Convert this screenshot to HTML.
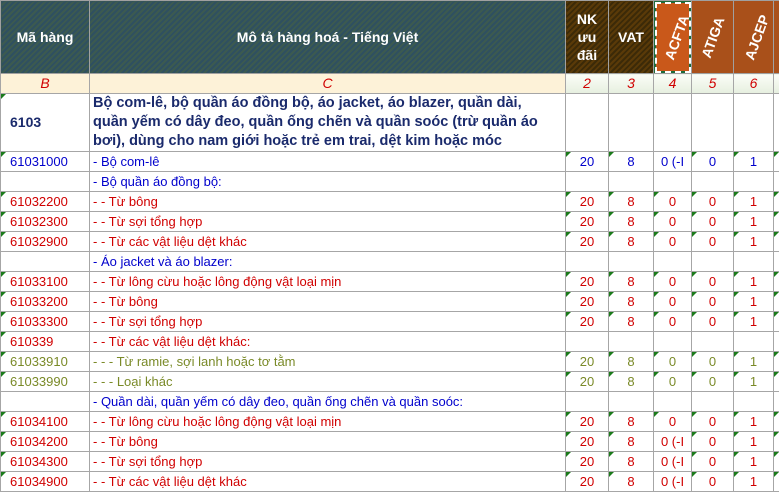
<!DOCTYPE html>
<html><head><meta charset="utf-8"><style>
body{margin:0;width:779px;height:490px;overflow:hidden;background:#fff;font-family:"Liberation Sans",Arial,sans-serif;}
table{border-collapse:collapse;table-layout:fixed;position:absolute;left:0;top:0;width:781px;}
td{border:1px solid #a6a6a6;padding:0;font-size:13px;height:19px;line-height:19px;white-space:nowrap;overflow:hidden;position:relative;}
.hd{height:72px;color:#fff;font-weight:bold;font-size:14px;text-align:center;border-color:#a0a0a0;}
.blue1{background:repeating-linear-gradient(135deg,#2f5060 0 2px,#3c5a50 2px 4px);}
.brn{background:repeating-linear-gradient(135deg,#5a3a08 0 2px,#3c2a08 2px 4px);}
.or1{background:#c9581a;outline:2px dashed #fff;outline-offset:-3px;box-shadow:inset 0 0 0 2px #1e6b3a;}
.or2{background:#a9501a;}
.rot{display:inline-block;transform:rotate(-70deg);font-size:14px;}
.lt td{height:19px;font-style:italic;color:#d00000;text-align:center;font-size:14px;}
.cr{background:#fdf2d8;}
.gr{background:linear-gradient(#fbfdf7,#e6efdf);}
.t::before{content:"";position:absolute;left:0;top:0;border-top:5px solid #1a7a1a;border-right:5px solid transparent;}
.n{text-align:center;}
.c{text-indent:9px;}
.d{text-indent:3px;}
.b{color:#0000cc}.r{color:#d00000}.o{color:#7a8a28}
</style></head><body>
<table>
<colgroup><col style="width:89px"><col style="width:476px"><col style="width:43px"><col style="width:45px"><col style="width:38px"><col style="width:42px"><col style="width:40px"><col style="width:8px"></colgroup>
<tr><td class="hd blue1">Mã hàng</td><td class="hd blue1">Mô tả hàng hoá - Tiếng Việt</td><td class="hd brn" style="line-height:18px;white-space:normal">NK<br>ưu<br>đãi</td><td class="hd brn">VAT</td><td class="hd or1"><span class="rot">ACFTA</span></td><td class="hd or2"><span class="rot">ATIGA</span></td><td class="hd or2"><span class="rot">AJCEP</span></td><td class="hd or2"></td></tr>
<tr class="lt"><td class="cr">B</td><td class="cr">C</td><td class="gr">2</td><td class="gr">3</td><td class="gr">4</td><td class="gr">5</td><td class="gr">6</td><td class="gr"></td></tr>
<tr><td class="t" style="height:56px;font-weight:bold;color:#1a2a6c;text-indent:9px;font-size:14px">6103</td><td style="height:56px;font-weight:bold;color:#1a2a6c;font-size:14.5px;line-height:19px;padding-left:3px">Bộ com-lê, bộ quần áo đồng bộ, áo jacket, áo blazer, quần dài,<br>quần yếm có dây đeo, quần ống chẽn và quần soóc (trừ quần áo<br>bơi), dùng cho nam giới hoặc trẻ em trai, dệt kim hoặc móc</td><td></td><td></td><td></td><td></td><td></td><td></td></tr>
<tr class="b"><td class="t c">61031000</td><td class="d">- Bộ com-lê</td><td class="t n">20</td><td class="t n">8</td><td class="n">0 (-I</td><td class="t n">0</td><td class="t n">1</td><td class="t"></td></tr>
<tr class="b"><td></td><td class="d">- Bộ quần áo đồng bộ:</td><td></td><td></td><td></td><td></td><td></td><td></td></tr>
<tr class="r"><td class="t c">61032200</td><td class="d">- - Từ bông</td><td class="t n">20</td><td class="t n">8</td><td class="t n">0</td><td class="t n">0</td><td class="t n">1</td><td class="t"></td></tr>
<tr class="r"><td class="t c">61032300</td><td class="d">- - Từ sợi tổng hợp</td><td class="t n">20</td><td class="t n">8</td><td class="t n">0</td><td class="t n">0</td><td class="t n">1</td><td class="t"></td></tr>
<tr class="r"><td class="t c">61032900</td><td class="d">- - Từ các vật liệu dệt khác</td><td class="t n">20</td><td class="t n">8</td><td class="t n">0</td><td class="t n">0</td><td class="t n">1</td><td class="t"></td></tr>
<tr class="b"><td></td><td class="d">- Áo jacket và áo blazer:</td><td></td><td></td><td></td><td></td><td></td><td></td></tr>
<tr class="r"><td class="t c">61033100</td><td class="d">- - Từ lông cừu hoặc lông động vật loại mịn</td><td class="t n">20</td><td class="t n">8</td><td class="t n">0</td><td class="t n">0</td><td class="t n">1</td><td class="t"></td></tr>
<tr class="r"><td class="t c">61033200</td><td class="d">- - Từ bông</td><td class="t n">20</td><td class="t n">8</td><td class="t n">0</td><td class="t n">0</td><td class="t n">1</td><td class="t"></td></tr>
<tr class="r"><td class="t c">61033300</td><td class="d">- - Từ sợi tổng hợp</td><td class="t n">20</td><td class="t n">8</td><td class="t n">0</td><td class="t n">0</td><td class="t n">1</td><td class="t"></td></tr>
<tr class="r"><td class="t c">610339</td><td class="d">- - Từ các vật liệu dệt khác:</td><td></td><td></td><td></td><td></td><td></td><td></td></tr>
<tr class="o"><td class="t c">61033910</td><td class="d">- - - Từ ramie, sợi lanh hoặc tơ tằm</td><td class="t n">20</td><td class="t n">8</td><td class="t n">0</td><td class="t n">0</td><td class="t n">1</td><td class="t"></td></tr>
<tr class="o"><td class="t c">61033990</td><td class="d">- - - Loại khác</td><td class="t n">20</td><td class="t n">8</td><td class="t n">0</td><td class="t n">0</td><td class="t n">1</td><td class="t"></td></tr>
<tr class="b"><td></td><td class="d">- Quần dài, quần yếm có dây đeo, quần ống chẽn và quần soóc:</td><td></td><td></td><td></td><td></td><td></td><td></td></tr>
<tr class="r"><td class="t c">61034100</td><td class="d">- - Từ lông cừu hoặc lông động vật loại mịn</td><td class="t n">20</td><td class="t n">8</td><td class="t n">0</td><td class="t n">0</td><td class="t n">1</td><td class="t"></td></tr>
<tr class="r"><td class="t c">61034200</td><td class="d">- - Từ bông</td><td class="t n">20</td><td class="t n">8</td><td class="n">0 (-I</td><td class="t n">0</td><td class="t n">1</td><td class="t"></td></tr>
<tr class="r"><td class="t c">61034300</td><td class="d">- - Từ sợi tổng hợp</td><td class="t n">20</td><td class="t n">8</td><td class="n">0 (-I</td><td class="t n">0</td><td class="t n">1</td><td class="t"></td></tr>
<tr class="r"><td class="t c">61034900</td><td class="d">- - Từ các vật liệu dệt khác</td><td class="t n">20</td><td class="t n">8</td><td class="n">0 (-I</td><td class="t n">0</td><td class="t n">1</td><td class="t"></td></tr>
</table>
</body></html>
